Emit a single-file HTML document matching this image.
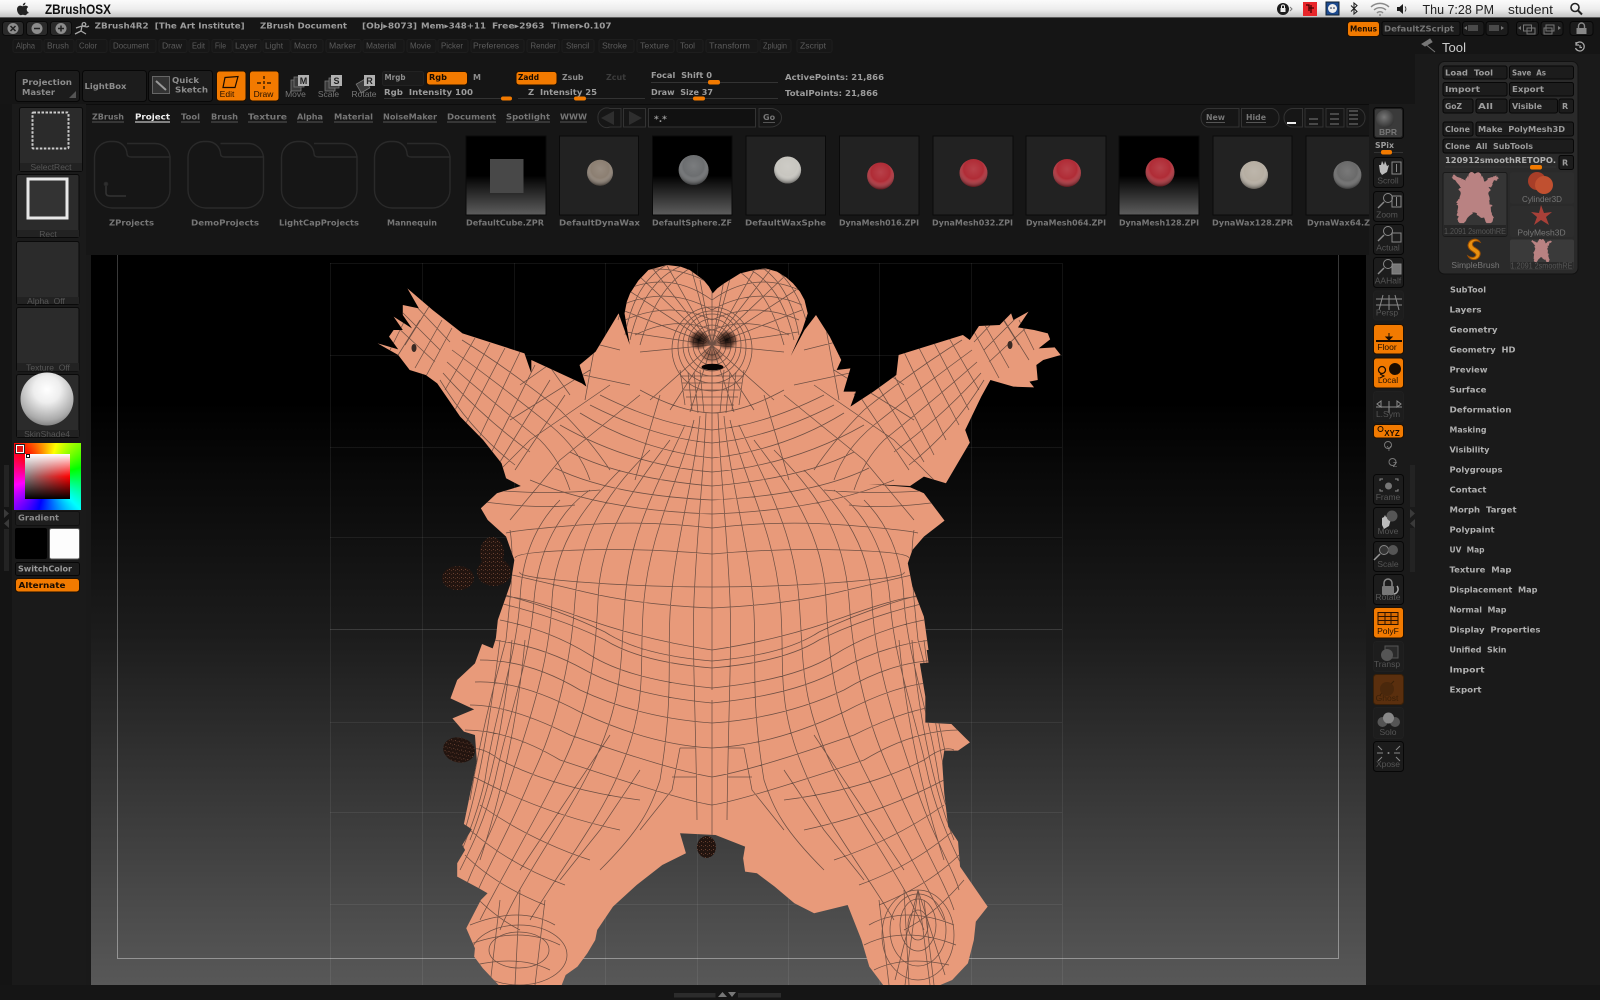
<!DOCTYPE html>
<html><head><meta charset="utf-8"><title>ZBrushOSX</title>
<style>
html,body{margin:0;padding:0;background:#191919;overflow:hidden}
#w{position:relative;width:1600px;height:1000px;overflow:hidden;filter:blur(.3px)}
svg{position:absolute;left:0;top:0}
text{white-space:pre}
.b{font:bold 8px "DejaVu Sans",sans-serif;fill:#9c9c9c}
.t{font:bold 8px "DejaVu Sans",sans-serif;fill:#b0b0b0}
.l{font:bold 8px "DejaVu Sans",sans-serif;fill:#767676}
.o{font:bold 8px "DejaVu Sans",sans-serif;fill:#1a0c00}
.m{font:8.5px "Liberation Sans",sans-serif;fill:#5c5c5c}
.s{font:8.5px "Liberation Sans",sans-serif;fill:#777;text-anchor:middle}
.d{font:8.5px "Liberation Sans",sans-serif;fill:#565656;text-anchor:middle}
.k{font:8.5px "Liberation Sans",sans-serif;fill:#241000;text-anchor:middle}
.btn{fill:#1c1c1c;stroke:#070707}
.org{fill:#f27a00;stroke:#201000}
.sh{fill:#2b2b2b;stroke:#0a0a0a}
.line{fill:none;stroke:#333;stroke-width:1}
</style></head>
<body><div id="w">
<svg width="1600" height="1000" viewBox="0 0 1600 1000" xmlns="http://www.w3.org/2000/svg">
<defs>
<linearGradient id="bar" x1="0" y1="0" x2="0" y2="1"><stop offset="0" stop-color="#fbfbfb"/><stop offset=".55" stop-color="#ececec"/><stop offset="1" stop-color="#c4c4c4"/></linearGradient>
<linearGradient id="cv" gradientUnits="userSpaceOnUse" x1="0" y1="255" x2="0" y2="985"><stop offset="0" stop-color="#000"/><stop offset=".2" stop-color="#000"/><stop offset=".52" stop-color="#1c1c1c"/><stop offset="1" stop-color="#585858"/></linearGradient>
<linearGradient id="fr" gradientUnits="userSpaceOnUse" x1="0" y1="255" x2="0" y2="960"><stop offset="0" stop-color="#fff" stop-opacity=".22"/><stop offset="1" stop-color="#fff" stop-opacity=".38"/></linearGradient>
<linearGradient id="th" x1="0" y1="0" x2="0" y2="1"><stop offset="0" stop-color="#000"/><stop offset=".5" stop-color="#000"/><stop offset="1" stop-color="#5e5e5e"/></linearGradient>
<radialGradient id="sp" cx=".5" cy=".36" r=".64"><stop offset="0" stop-color="#fff" stop-opacity=".1"/><stop offset=".55" stop-color="#fff" stop-opacity="0"/><stop offset="1" stop-color="#000" stop-opacity=".5"/></radialGradient>
<radialGradient id="ws" cx=".5" cy=".32" r=".72"><stop offset="0" stop-color="#fff"/><stop offset=".35" stop-color="#eee"/><stop offset=".8" stop-color="#aaa"/><stop offset="1" stop-color="#777"/></radialGradient>
<radialGradient id="bp" cx=".45" cy=".4" r=".6"><stop offset="0" stop-color="#777"/><stop offset="1" stop-color="#333"/></radialGradient>
<radialGradient id="dk" cx=".5" cy=".5" r=".5"><stop offset="0" stop-color="#000" stop-opacity=".95"/><stop offset=".6" stop-color="#1a0c08" stop-opacity=".65"/><stop offset="1" stop-color="#000" stop-opacity="0"/></radialGradient>
<pattern id="speck" width="4" height="4" patternUnits="userSpaceOnUse"><rect width="4" height="4" fill="#22140f"/><rect x="1" y="1" width="1" height="1" fill="#6a4232"/><rect x="3" y="2" width="1" height="1" fill="#4e3024"/></pattern>
<polygon id="p1" transform="translate(350,250) scale(.4591,.3333)" points="790,130 800,115 815,100 850,70 880,60 905,55 930,65 950,82 965,100 980,125 990,150 997,190 985,240 960,318 990,240 1015,195 1045,260 1070,330 1060,360 1090,355 1075,425 1102,425 1090,470 1140,425 1190,375 1195,315 1335,255 1350,270 1370,228 1415,225 1440,190 1445,210 1478,185 1455,232 1490,240 1520,250 1525,268 1500,295 1535,292 1548,315 1510,330 1495,345 1498,390 1480,395 1490,412 1445,410 1395,390 1375,440 1340,540 1350,578 1298,700 1250,680 1220,708 1130,702 1220,712 1250,730 1295,812 1250,860 1225,900 1215,940 1225,1010 1250,1100 1260,1200 315,1200 322,1110 350,1000 358,930 340,860 300,810 285,775 320,730 372,708 340,685 330,640 290,570 240,500 190,400 165,375 130,360 105,315 60,280 105,298 85,260 95,240 115,240 95,200 135,235 115,195 115,165 150,175 125,115 180,180 245,250 380,310 395,370 395,330 505,400 515,410 500,345 535,305 585,190 625,345 610,290 598,190 603,155 610,130 628,92 650,60 690,45 720,50 740,60 770,90 782,110"/>
<polygon id="p2" transform="translate(400,620) scale(.3944,.3333)" points="1325,0 1340,128 1318,130 1332,230 1332,308 1398,312 1445,367 1415,392 1380,392 1375,430 1380,520 1390,620 1415,665 1420,740 1490,860 1460,905 1455,960 1440,1030 1400,1080 1370,1095 1225,1095 1190,1040 1170,960 1135,855 1050,880 1000,850 950,800 905,760 875,755 870,715 875,680 800,645 710,640 725,700 665,735 600,795 540,860 500,930 495,960 475,1000 450,1040 420,1065 410,1095 250,1095 210,1045 188,1010 190,985 168,925 205,840 222,820 200,805 145,770 145,730 165,690 158,675 182,628 162,612 178,520 195,425 190,345 162,335 133,295 188,268 128,235 145,180 190,130 208,72 235,85 250,30 255,0"/>
<g id="sil"><use href="#p1"/><use href="#p2"/></g>
<clipPath id="silc"><use href="#p1"/><use href="#p2"/></clipPath>
<clipPath id="shelf"><rect x="86" y="130" width="1283" height="110"/></clipPath>
<path id="mesh" d="M706,413 C704,470 697,530 694,600 C692,650 696,720 697,820
M700,416 C694,480 676,540 671,600 C666,650 675,690 660,780 C650,810 640,830 600,870
M694,420 C680,480 650,530 644,600 C638,660 650,700 620,770 C600,820 560,870 530,920
M685,425 C660,480 630,530 625,600 C620,660 625,700 590,770 C560,830 520,880 500,930
M670,440 C640,480 600,530 598,600 C595,660 590,710 560,770 C530,830 500,880 480,920
M650,450 C610,490 580,530 575,600 C572,650 560,720 530,780 C510,830 480,880 470,910
M620,470 C590,500 555,540 552,600 C550,660 530,720 510,780 C495,830 470,870 465,890
M590,490 C560,510 538,550 534,600 C530,660 510,710 495,780 C485,820 470,850 460,870
M560,500 C540,520 522,550 520,600 C516,660 495,710 485,780 C478,810 470,830 462,850
M510,530 C515,560 510,600 506,640 C490,700 480,740 470,800
M500,640 C490,720 480,780 465,830 M512,640 C505,720 490,790 470,840 M525,640 C518,720 500,800 480,860
M640,770 L600,830 L560,880 M610,735 L560,810 L520,870 M680,748 L672,790 L640,830 M696,748 H680 M696,777 H672
M712,528 Q644,520 580,525 T506,533
M712,554 Q644,548 580,550 T515,558
M712,587 Q644,587 580,582 T520,572
M712,608 Q640,605 585,592 T512,575
M712,650 Q644,640 580,617 T502,597
M712,661 Q640,655 605,632 Q560,610 505,595
M712,668 Q640,662 605,640 Q560,618 503,604
M712,688 Q630,680 590,655 Q550,630 500,620
M712,703 Q630,695 585,670 Q540,645 492,640
M712,723 Q640,718 580,690 Q530,660 480,660
M712,748 Q650,745 580,712 Q520,680 475,682
M712,777 Q670,770 570,735 Q510,705 470,705
M712,805 Q680,800 560,760 Q510,730 465,730
M640,800 Q560,790 500,760 Q480,745 470,750
M620,830 Q550,815 490,785 L470,775
M590,860 Q530,840 480,805
M565,885 Q510,865 470,830
M545,905 Q495,885 465,855
M520,930 Q490,915 460,880
M470,925 Q520,905 555,925 M468,945 Q520,925 560,945 M475,965 Q520,955 550,970
M500,900 L490,985 M520,890 L515,985 M545,900 L535,985
M712,413 Q680,412 640,390
M712,430 Q660,425 600,395
M712,443 Q655,438 590,405
M712,458 Q640,450 580,413
M712,472 Q630,465 560,425
M712,486 Q620,478 570,452
M712,500 Q610,495 555,468
M712,514 Q600,510 530,480
M600,490 Q550,495 490,490 M575,505 Q540,510 470,500 M660,395 L635,480 M640,395 L560,460 L510,520 M610,385 L530,440 L490,480 M590,370 L510,420 M570,350 L520,385
M605,290 L585,400 M595,320 L545,360 L570,395 M580,340 L620,350 M560,370 L630,385
M462,340 Q510,370 560,410 Q590,440 610,470 M452,350 Q500,385 550,425 Q580,450 590,480 M447,362 Q490,400 540,440 Q560,460 570,490 M443,373 Q480,415 530,452 M440,380 Q470,430 515,465
M475,338 L445,390 M490,343 L455,410 M505,348 L465,425 M520,352 L478,440 M535,365 L490,455 M550,380 L500,462 M565,395 L515,470
M400,310 L440,350 M412,302 L450,342 M395,325 L435,362 M420,320 L395,360 M405,320 L390,350 M430,305 L405,345 M442,320 L415,368 M452,328 L425,378
M705,262 Q660,275 640,345 M690,263 Q645,275 630,340 M670,263 Q635,280 625,335 M650,268 Q628,285 618,320
M712,300 Q670,270 625,290 M712,310 Q668,285 622,305 M712,320 Q670,300 625,320 M712,330 Q675,315 635,335 M712,285 Q680,265 640,270 M712,275 Q690,262 660,262
M712,345 L665,262 M712,345 L650,265 M712,345 L638,275 M712,345 L628,290 M712,345 L622,310 M712,345 L626,332 M712,345 L640,352 M712,345 L690,264 M712,345 L700,280 M712,345 L650,400 M712,345 L670,410 M712,345 L690,412
M700,370 L704,413 M694,372 L698,413 M688,372 L692,410 M680,370 L685,405
M680,376 H712 M682,383 H712 M684,390 H712 M686,397 H712 M690,405 H712"/>
</defs>

<!-- base -->
<rect width="1600" height="1000" fill="#191919"/>
<rect x="0" y="18" width="1600" height="86" fill="#151515"/>
<rect x="0" y="104" width="12" height="896" fill="#141414"/>
<rect x="12" y="104" width="74" height="896" fill="#1a1a1a"/>
<rect x="1366" y="104" width="49" height="896" fill="#1a1a1a"/>
<rect x="1415" y="54" width="185" height="946" fill="#1a1a1a"/>
<rect x="0" y="985" width="1600" height="15" fill="#151515"/>

<!-- canvas -->
<rect x="91" y="255" width="1275" height="730" fill="url(#cv)"/>
<g fill="none" stroke="#fff" stroke-opacity=".07" stroke-width="1">
<path d="M330.5,263V985M422.5,263V985M514.5,263V985M605.5,263V985M697.5,263V985M788.5,263V985M879.5,263V985M971.5,263V985M1062.5,263V985"/>
<path d="M330,263.5H1062M330,355.5H1062M330,447.5H1062M330,537.5H1062M330,722.5H1062M330,812.5H1062M330,904.5H1062"/>
<path d="M330,629.5H1062" stroke-opacity=".14"/>
</g>
<path d="M117.5,255V958.5H1338.5V255" fill="none" stroke="url(#fr)"/>

<!-- model -->
<use href="#sil" fill="#e89a7a"/>
<g clip-path="url(#silc)" fill="none" stroke="#6f5044" stroke-width=".75">
<use href="#mesh"/>
<use href="#mesh" transform="translate(1424,0) scale(-1,1)"/>
<path d="M712,262V690M712,700V860"/>
<ellipse cx="712" cy="345" rx="9" ry="10"/><ellipse cx="712" cy="345" rx="14" ry="15"/><ellipse cx="712" cy="345" rx="19" ry="20"/><ellipse cx="712" cy="345" rx="24" ry="26"/><ellipse cx="712" cy="345" rx="29" ry="31"/><ellipse cx="712" cy="347" rx="34" ry="36"/><ellipse cx="712" cy="349" rx="40" ry="42"/>
<ellipse cx="918" cy="925" rx="10" ry="15"/><ellipse cx="918" cy="925" rx="18" ry="26"/><ellipse cx="918" cy="930" rx="28" ry="36"/><ellipse cx="918" cy="935" rx="36" ry="45"/>
<path d="M918,890 L905,985 M918,890 L930,985 M918,890 L895,980 M918,890 L945,975"/>
<ellipse cx="519" cy="950" rx="30" ry="18"/><ellipse cx="519" cy="955" rx="48" ry="30"/>
</g>
<ellipse cx="699" cy="340" rx="11" ry="10" fill="url(#dk)"/><ellipse cx="727" cy="340" rx="11" ry="10" fill="url(#dk)"/>
<ellipse cx="712" cy="355" rx="12" ry="8" fill="url(#dk)" opacity=".4"/>
<ellipse cx="712.5" cy="367" rx="11" ry="3.2" fill="#080404"/>
<ellipse cx="414" cy="348" rx="2.5" ry="4" fill="#3a2a24"/><ellipse cx="1010" cy="345" rx="2.5" ry="4" fill="#3a2a24"/>
<g fill="url(#speck)">
<ellipse cx="492" cy="553" rx="12" ry="16"/><ellipse cx="458" cy="578" rx="16" ry="12"/><ellipse cx="494" cy="572" rx="17" ry="14"/><ellipse cx="459" cy="750" rx="16" ry="12.5" transform="rotate(12 459 750)"/><ellipse cx="706.5" cy="847" rx="9.5" ry="11"/>
</g>

<!-- mac menu bar -->
<rect width="1600" height="17" fill="url(#bar)"/>
<rect y="17" width="1600" height="1" fill="#5a5a5a"/>
<path transform="translate(3,0)" d="M24.5 13.2c-.8 1.3-1.6 2-2.4 2-.8 0-1.2-.5-2.2-.5s-1.4.5-2.2.5c-1.5 0-3.7-3-3.7-5.8 0-2.4 1.6-3.8 3.1-3.8 1 0 1.8.6 2.7.6.9 0 1.6-.7 2.9-.6 1 .1 1.9.5 2.5 1.4-2.2 1.4-1.8 4.4.5 5.4-.2.5-.5.9-.7 1.3zM19.8 5.5c-.1-1.4 1.1-2.8 2.6-2.9.2 1.5-1.2 3-2.6 2.9z" fill="#222"/>
<text x="45" y="14" textLength="66" lengthAdjust="spacingAndGlyphs" style="font:bold 13.5px 'Liberation Sans',sans-serif;fill:#111">ZBrushOSX</text>
<circle cx="1283" cy="9" r="6" fill="#1c1c1c"/><rect x="1280.5" y="8" width="5" height="4" fill="#eee"/><path d="M1281.5,8V6.5a1.5,1.5 0 0 1 3,0V8" fill="none" stroke="#eee"/><path d="M1290,7l2,2-2,2" fill="none" stroke="#777"/>
<rect x="1303" y="2" width="14" height="14" fill="#e8262a"/><path d="M1306,5h3v6M1311,5v8M1309,8h5" stroke="#400" fill="none" stroke-width="1.3"/>
<rect x="1326" y="2" width="13" height="13" fill="#1c4a90" stroke="#123"/><circle cx="1332.5" cy="8.5" r="4.5" fill="#eee"/><circle cx="1331" cy="8" r=".8" fill="#124"/><circle cx="1334" cy="8" r=".8" fill="#124"/>
<path d="M1351,5.5l6,6-3,2.5v-11l3,2.5-6,6" fill="none" stroke="#222" stroke-width="1.1"/>
<path d="M1371,7a13,13 0 0 1 18,0M1374,10a9,9 0 0 1 12,0M1377,13a4,4 0 0 1 6,0" fill="none" stroke="#8a8a8a" stroke-width="1.4"/><circle cx="1380" cy="15" r="1" fill="#888"/>
<path d="M1397,7h2.5l3.5-3v10l-3.5-3h-2.5z" fill="#1c1c1c"/><path d="M1405,6.5a4,4 0 0 1 0,5" fill="none" stroke="#333"/>
<text x="1422.5" y="14" textLength="71.5" lengthAdjust="spacingAndGlyphs" style="font:13px 'Liberation Sans',sans-serif;fill:#222">Thu 7:28 PM</text>
<text x="1508" y="14" textLength="45" lengthAdjust="spacingAndGlyphs" style="font:13px 'Liberation Sans',sans-serif;fill:#222">student</text>
<circle cx="1575" cy="7.5" r="4" fill="none" stroke="#222" stroke-width="1.6"/><path d="M1578,10.5l4,4" stroke="#222" stroke-width="2"/>

<!-- title row -->
<g>
<rect x="2.5" y="21.5" width="21" height="14" rx="3" fill="#2a2a2a" stroke="#0a0a0a"/><rect x="26.5" y="21.5" width="21" height="14" rx="3" fill="#2a2a2a" stroke="#0a0a0a"/><rect x="50.5" y="21.5" width="21" height="14" rx="3" fill="#2a2a2a" stroke="#0a0a0a"/>
<circle cx="13" cy="28.5" r="5.5" fill="#8c8c8c"/><circle cx="37" cy="28.5" r="5.5" fill="#8c8c8c"/><circle cx="61" cy="28.5" r="5.5" fill="#8c8c8c"/>
<path d="M10.5,26l5,5m0-5l-5,5M34,28.5h6M58,28.5h6M61,25.5v6" stroke="#222" stroke-width="1.5"/>
<path d="M84,22.5a1.8,1.8 0 1 1-.1,0M82,26l-6,2M82,26l5,1 2,-1M82,26l-1,5-6,3M81,31l5,3" fill="none" stroke="#a8a8a8" stroke-width="1.3"/>
</g>
<g class="tt">
<text class="b" x="94.7" y="28.5" textLength="150" lengthAdjust="spacingAndGlyphs">ZBrush4R2  [The Art Institute]</text>
<text class="b" x="260" y="28.5" textLength="87" lengthAdjust="spacingAndGlyphs">ZBrush Document</text>
<text class="b" x="362" y="28.5" textLength="55" lengthAdjust="spacingAndGlyphs">[Obj▸8073]</text>
<text class="b" x="421" y="28.5" textLength="65" lengthAdjust="spacingAndGlyphs">Mem▸348+11</text>
<text class="b" x="492" y="28.5" textLength="52.5" lengthAdjust="spacingAndGlyphs">Free▸2963</text>
<text class="b" x="551" y="28.5" textLength="60.5" lengthAdjust="spacingAndGlyphs">Timer▸0.107</text>
</g>

<!-- menu row -->
<g fill="#171717" stroke="#1e1e1e">
<rect x="13" y="39.5" width="29" height="13" rx="2"/><rect x="44" y="39.5" width="30" height="13" rx="2"/><rect x="76" y="39.5" width="31" height="13" rx="2"/><rect x="110" y="39.5" width="46" height="13" rx="2"/><rect x="159" y="39.5" width="28" height="13" rx="2"/><rect x="189" y="39.5" width="20" height="13" rx="2"/><rect x="212" y="39.5" width="20" height="13" rx="2"/><rect x="233" y="39.5" width="28" height="13" rx="2"/><rect x="263" y="39.5" width="27" height="13" rx="2"/><rect x="291" y="39.5" width="32" height="13" rx="2"/><rect x="326" y="39.5" width="35" height="13" rx="2"/><rect x="363" y="39.5" width="41" height="13" rx="2"/><rect x="407" y="39.5" width="29" height="13" rx="2"/><rect x="438" y="39.5" width="30" height="13" rx="2"/><rect x="471" y="39.5" width="53" height="13" rx="2"/><rect x="527" y="39.5" width="32" height="13" rx="2"/><rect x="562" y="39.5" width="32" height="13" rx="2"/><rect x="599" y="39.5" width="35" height="13" rx="2"/><rect x="637" y="39.5" width="37" height="13" rx="2"/><rect x="677" y="39.5" width="26" height="13" rx="2"/><rect x="706" y="39.5" width="52" height="13" rx="2"/><rect x="760" y="39.5" width="31" height="13" rx="2"/><rect x="797" y="39.5" width="35" height="13" rx="2"/>
</g>
<g>
<text class="m" x="16" y="48.5" textLength="19" lengthAdjust="spacingAndGlyphs">Alpha</text>
<text class="m" x="47" y="48.5" textLength="22" lengthAdjust="spacingAndGlyphs">Brush</text>
<text class="m" x="79" y="48.5" textLength="18" lengthAdjust="spacingAndGlyphs">Color</text>
<text class="m" x="113" y="48.5" textLength="36" lengthAdjust="spacingAndGlyphs">Document</text>
<text class="m" x="162" y="48.5" textLength="20" lengthAdjust="spacingAndGlyphs">Draw</text>
<text class="m" x="192" y="48.5" textLength="13" lengthAdjust="spacingAndGlyphs">Edit</text>
<text class="m" x="215" y="48.5" textLength="11" lengthAdjust="spacingAndGlyphs">File</text>
<text class="m" x="235" y="48.5" textLength="22" lengthAdjust="spacingAndGlyphs">Layer</text>
<text class="m" x="265" y="48.5" textLength="18" lengthAdjust="spacingAndGlyphs">Light</text>
<text class="m" x="294" y="48.5" textLength="23" lengthAdjust="spacingAndGlyphs">Macro</text>
<text class="m" x="329" y="48.5" textLength="27" lengthAdjust="spacingAndGlyphs">Marker</text>
<text class="m" x="366" y="48.5" textLength="30" lengthAdjust="spacingAndGlyphs">Material</text>
<text class="m" x="410" y="48.5" textLength="21" lengthAdjust="spacingAndGlyphs">Movie</text>
<text class="m" x="441" y="48.5" textLength="22" lengthAdjust="spacingAndGlyphs">Picker</text>
<text class="m" x="473" y="48.5" textLength="46" lengthAdjust="spacingAndGlyphs">Preferences</text>
<text class="m" x="530.5" y="48.5" textLength="25.5" lengthAdjust="spacingAndGlyphs">Render</text>
<text class="m" x="566" y="48.5" textLength="23.5" lengthAdjust="spacingAndGlyphs">Stencil</text>
<text class="m" x="602" y="48.5" textLength="25" lengthAdjust="spacingAndGlyphs">Stroke</text>
<text class="m" x="640" y="48.5" textLength="29" lengthAdjust="spacingAndGlyphs">Texture</text>
<text class="m" x="680" y="48.5" textLength="15" lengthAdjust="spacingAndGlyphs">Tool</text>
<text class="m" x="709" y="48.5" textLength="41" lengthAdjust="spacingAndGlyphs">Transform</text>
<text class="m" x="763" y="48.5" textLength="24" lengthAdjust="spacingAndGlyphs">Zplugin</text>
<text class="m" x="800" y="48.5" textLength="26" lengthAdjust="spacingAndGlyphs">Zscript</text>
</g>

<!-- top right row -->
<rect x="1347.5" y="21.5" width="32" height="15" rx="3" class="org"/>
<text class="o" x="1350" y="31.5" textLength="27" lengthAdjust="spacingAndGlyphs">Menus</text>
<rect x="1382" y="21.5" width="78" height="14" rx="2" class="btn"/>
<text class="l" x="1384" y="31.5" textLength="70" lengthAdjust="spacingAndGlyphs">DefaultZScript</text>
<g fill="#1c1c1c" stroke="#070707"><rect x="1462.5" y="21.5" width="21.5" height="14" rx="3"/><rect x="1486" y="21.5" width="22" height="14" rx="3"/><rect x="1516.5" y="21.5" width="22" height="14" rx="3"/><rect x="1541" y="21.5" width="22" height="14" rx="3"/><rect x="1570" y="21.5" width="23" height="14" rx="3"/></g>
<path d="M1469,25v6M1471,25v6M1473,25v6M1475,25v6M1477,25v6M1490,25v6M1492,25v6M1494,25v6M1496,25v6M1498,25v6" stroke="#777"/>
<path d="M1467,26l-3,2 3,2zM1501,26l3,2-3,2zM1521,26l-3,2 3,2zM1558,26l3,2-3,2z" fill="#777"/>
<path d="M1523.5,25h8v6h-8zM1527,28h8v6h-8zM1546,25h8v6h-8zM1544,28h8v6h-8z" fill="none" stroke="#777"/>
<rect x="1576.5" y="28" width="10" height="6" fill="#888"/><path d="M1578.5,28v-2a3,3 0 0 1 6,0v2" fill="none" stroke="#888" stroke-width="1.4"/>

<!-- main buttons -->
<rect x="15.5" y="70.5" width="64" height="31" rx="3" class="btn"/>
<text class="l" x="22" y="85" textLength="50" lengthAdjust="spacingAndGlyphs" style="fill:#8c8c8c">Projection</text>
<text class="l" x="22" y="95" textLength="33" lengthAdjust="spacingAndGlyphs" style="fill:#8c8c8c">Master</text>
<path d="M69,98l7-7v7z" fill="#555"/>
<rect x="82.5" y="70.5" width="64" height="31" rx="3" class="btn"/>
<text class="l" x="84.5" y="89" textLength="42" lengthAdjust="spacingAndGlyphs" style="fill:#8c8c8c">LightBox</text>
<rect x="148.5" y="70.5" width="64" height="31" rx="3" class="btn"/>
<rect x="152.5" y="76.5" width="17" height="17" fill="#333" stroke="#666"/><path d="M156,81l10,9" stroke="#999" stroke-width="2"/>
<text class="l" x="172" y="83" textLength="27" lengthAdjust="spacingAndGlyphs" style="fill:#8c8c8c">Quick</text>
<text class="l" x="175" y="92.5" textLength="33" lengthAdjust="spacingAndGlyphs" style="fill:#8c8c8c">Sketch</text>
<rect x="216.5" y="71" width="29.5" height="30" rx="3" class="org"/>
<rect x="249.5" y="71" width="29.5" height="30" rx="3" class="org"/>
<path d="M225,77.5l13,-1-3,11-12,0z" fill="none" stroke="#1a0c00" stroke-width="1.2"/>
<path d="M264,76v3M264,81v3M264,86v3M257,83h4M267,83h4" stroke="#1a0c00" stroke-width="1.2"/>
<text class="k" x="227" y="97">Edit</text><text class="k" x="263.5" y="97">Draw</text>
<!-- move scale rotate -->
<g fill="#3a3a3a" stroke="#777" stroke-width=".8"><rect x="291" y="80" width="10" height="11"/><rect x="294" y="77" width="10" height="10"/><rect x="325" y="81" width="10" height="10"/><rect x="329" y="78" width="10" height="10"/><rect x="358" y="81" width="10" height="10" transform="rotate(-30 363 86)"/></g>
<rect x="298" y="75" width="11" height="11" fill="#b0b0b0"/><rect x="331" y="75" width="11" height="11" fill="#b0b0b0"/><rect x="364" y="75" width="11" height="11" fill="#b0b0b0"/>
<text x="303.5" y="84" style="font:bold 9px 'Liberation Sans',sans-serif;fill:#222;text-anchor:middle">M</text><text x="336.5" y="84" style="font:bold 9px 'Liberation Sans',sans-serif;fill:#222;text-anchor:middle">S</text><text x="369.5" y="84" style="font:bold 9px 'Liberation Sans',sans-serif;fill:#222;text-anchor:middle">R</text>
<text class="d" x="295.5" y="97" style="fill:#777">Move</text><text class="d" x="328.5" y="97" style="fill:#777">Scale</text><text class="d" x="364" y="97" style="fill:#777">Rotate</text>
<!-- rgb -->
<rect x="382.5" y="71.5" width="41" height="14" rx="2" fill="#1a1a1a" stroke="#222"/>
<text class="l" x="384.5" y="80" textLength="21" lengthAdjust="spacingAndGlyphs" style="fill:#8c8c8c">Mrgb</text>
<rect x="426.5" y="71.5" width="41" height="13.5" rx="3" class="org"/>
<text class="o" x="429" y="80" textLength="18" lengthAdjust="spacingAndGlyphs">Rgb</text>
<text class="l" x="473" y="80" style="fill:#8c8c8c">M</text>
<text class="b" x="384" y="95" textLength="89" lengthAdjust="spacingAndGlyphs">Rgb  Intensity 100</text>
<path class="line" d="M384,98.5H512M518,98.5H645M651,82.5H778M651,98.5H778"/>
<g fill="#f27a00"><rect x="501" y="96.5" width="11" height="4" rx="2"/><rect x="574" y="96.5" width="12" height="4" rx="2"/><rect x="708" y="80" width="12" height="4.5" rx="2"/><rect x="693" y="96.5" width="12" height="4" rx="2"/></g>
<rect x="516" y="71.5" width="41" height="13.5" rx="3" class="org"/>
<text class="o" x="518" y="80" textLength="21" lengthAdjust="spacingAndGlyphs">Zadd</text>
<text class="l" x="562" y="80" textLength="21.5" lengthAdjust="spacingAndGlyphs" style="fill:#8c8c8c">Zsub</text>
<text class="l" x="606" y="80" textLength="20" lengthAdjust="spacingAndGlyphs" style="fill:#3c3c3c">Zcut</text>
<text class="b" x="528" y="95" textLength="69" lengthAdjust="spacingAndGlyphs">Z  Intensity 25</text>
<text class="b" x="651" y="78" textLength="61" lengthAdjust="spacingAndGlyphs">Focal  Shift 0</text>
<text class="b" x="651" y="95" textLength="62" lengthAdjust="spacingAndGlyphs">Draw  Size 37</text>
<text class="b" x="785" y="80" textLength="99" lengthAdjust="spacingAndGlyphs">ActivePoints: 21,866</text>
<text class="b" x="785" y="96" textLength="93" lengthAdjust="spacingAndGlyphs">TotalPoints: 21,866</text>

<!-- shelf panel -->
<rect x="86" y="104" width="1283" height="151" fill="#161616"/>
<rect x="86" y="104" width="1283" height="1" fill="#0c0c0c"/>
<g class="tabs">
<text class="l" x="92" y="119.5" textLength="32" lengthAdjust="spacingAndGlyphs">ZBrush</text>
<text x="135" y="119.5" textLength="35" lengthAdjust="spacingAndGlyphs" style="font:bold 8px 'DejaVu Sans',sans-serif;fill:#f0f0f0">Project</text>
<text class="l" x="181" y="119.5" textLength="19" lengthAdjust="spacingAndGlyphs">Tool</text>
<text class="l" x="211" y="119.5" textLength="27" lengthAdjust="spacingAndGlyphs">Brush</text>
<text class="l" x="248" y="119.5" textLength="39" lengthAdjust="spacingAndGlyphs">Texture</text>
<text class="l" x="297" y="119.5" textLength="26" lengthAdjust="spacingAndGlyphs">Alpha</text>
<text class="l" x="334" y="119.5" textLength="39" lengthAdjust="spacingAndGlyphs">Material</text>
<text class="l" x="383" y="119.5" textLength="54" lengthAdjust="spacingAndGlyphs">NoiseMaker</text>
<text class="l" x="447" y="119.5" textLength="49" lengthAdjust="spacingAndGlyphs">Document</text>
<text class="l" x="506" y="119.5" textLength="44" lengthAdjust="spacingAndGlyphs">Spotlight</text>
<text class="l" x="560" y="119.5" textLength="27" lengthAdjust="spacingAndGlyphs">WWW</text>
</g>
<path d="M92,122H124M181,122H200M211,122H238M248,122H287M297,122H323M334,122H373M383,122H437M447,122H496M506,122H550M560,122H587" stroke="#555" fill="none"/>
<path d="M135,122H170" stroke="#eee"/>
<!-- nav -->
<g fill="#161616" stroke="#333">
<path d="M610,108.5H621V127H610A9,9 0 0 1 598,118 A9,9 0 0 1 610,108.5Z"/><rect x="623.5" y="108.5" width="22" height="18.5"/><rect x="648.5" y="108.5" width="107" height="18.5" fill="#111"/><path d="M759,108.5H770A11,9 0 0 1 781.5,118 A11,9 0 0 1 770,127H759Z"/>
<path d="M1208,108.5H1239V127H1208A8,9 0 0 1 1201,118 A8,9 0 0 1 1208,108.5Z"/><path d="M1241.5,108.5H1272A8,9 0 0 1 1279,118 A8,9 0 0 1 1272,127H1241.5Z"/>
<path d="M1293,108.5H1302.5V127H1293A9,9 0 0 1 1284,118 A9,9 0 0 1 1293,108.5Z"/><rect x="1305" y="108.5" width="18" height="18.5"/><rect x="1326" y="108.5" width="18" height="18.5"/><path d="M1347,108.5H1357A8,9 0 0 1 1365,118 A8,9 0 0 1 1357,127H1347Z"/>
</g>
<path d="M601,118l13-7v14zM642,118l-13-7v14z" fill="#2e2e2e"/>
<text x="654" y="122" style="font:bold 9px 'DejaVu Sans',sans-serif;fill:#999">*.*</text>
<text class="l" x="763" y="120">Go</text><path d="M763,122.5H775" stroke="#555"/>
<text class="l" x="1206" y="120" textLength="19" lengthAdjust="spacingAndGlyphs">New</text><text class="l" x="1246" y="120" textLength="20" lengthAdjust="spacingAndGlyphs">Hide</text>
<path d="M1206,122.5H1225M1246,122.5H1266" stroke="#555"/>
<path d="M1287,123h9" stroke="#eee" stroke-width="2"/>
<path d="M1309,119h9M1309,124h9M1330,114h9M1330,119h9M1330,124h9M1349,111h9M1349,115h9M1349,119h9M1349,124h9" stroke="#666" stroke-width="1.2"/>

<!-- folders -->
<g fill="none" stroke="#2a2a2a" stroke-width="1.4">
<g id="fld"><path d="M110,141.5H114A13,13 0 0 1 127,153.5Q127,157 131,157H170V190A18,18 0 0 1 152,208H112A18,18 0 0 1 94.5,190V157A16,16 0 0 1 110,141.5Z M127,143.5H155A15,15 0 0 1 170,157"/></g>
<use href="#fld" x="93.5"/><use href="#fld" x="187"/><use href="#fld" x="280"/>
<path d="M106,184V193Q106,196 110,196H126" stroke="#333" stroke-width="1.6"/><circle cx="106" cy="184" r="1.6" fill="#333"/>
</g>
<g class="lab">
<text class="l" x="109" y="225.5" textLength="45" lengthAdjust="spacingAndGlyphs">ZProjects</text>
<text class="l" x="191" y="225.5" textLength="68" lengthAdjust="spacingAndGlyphs">DemoProjects</text>
<text class="l" x="279" y="225.5" textLength="80" lengthAdjust="spacingAndGlyphs">LightCapProjects</text>
<text class="l" x="387" y="225.5" textLength="50" lengthAdjust="spacingAndGlyphs">Mannequin</text>
<text class="l" x="466" y="225.5" textLength="78" lengthAdjust="spacingAndGlyphs">DefaultCube.ZPR</text>
<text class="l" x="559" y="225.5" textLength="81" lengthAdjust="spacingAndGlyphs">DefaultDynaWax</text>
<text class="l" x="652" y="225.5" textLength="80" lengthAdjust="spacingAndGlyphs">DefaultSphere.ZF</text>
<text class="l" x="745" y="225.5" textLength="81" lengthAdjust="spacingAndGlyphs">DefaultWaxSphe</text>
<text class="l" x="839" y="225.5" textLength="80" lengthAdjust="spacingAndGlyphs">DynaMesh016.ZPI</text>
<text class="l" x="932" y="225.5" textLength="81" lengthAdjust="spacingAndGlyphs">DynaMesh032.ZPI</text>
<text class="l" x="1026" y="225.5" textLength="80" lengthAdjust="spacingAndGlyphs">DynaMesh064.ZPI</text>
<text class="l" x="1119" y="225.5" textLength="80" lengthAdjust="spacingAndGlyphs">DynaMesh128.ZPI</text>
<text class="l" x="1212" y="225.5" textLength="81" lengthAdjust="spacingAndGlyphs">DynaWax128.ZPR</text>
<text class="l" x="1307" y="225.5" textLength="63" lengthAdjust="spacingAndGlyphs">DynaWax64.Z</text>
</g>
<!-- thumbs -->
<g stroke="#0a0a0a" clip-path="url(#shelf)">
<rect x="466" y="136" width="80" height="79" fill="url(#th)"/>
<rect x="559.5" y="136" width="79" height="79" fill="#222"/>
<rect x="652.5" y="136" width="79.5" height="79" fill="url(#th)"/>
<rect x="746" y="136" width="79.5" height="79" fill="#222"/>
<rect x="839.5" y="136" width="79.5" height="79" fill="#222"/>
<rect x="933" y="136" width="80" height="79" fill="#222"/>
<rect x="1026" y="136" width="80" height="79" fill="#222"/>
<rect x="1119" y="136" width="80" height="79" fill="url(#th)"/>
<rect x="1213" y="136" width="79" height="79" fill="#222"/>
<rect x="1306" y="136" width="79" height="79" fill="#222"/>
</g>
<rect x="490" y="159" width="33.5" height="34" fill="#484848"/>
<g stroke="none">
<circle cx="600" cy="172.7" r="13" fill="#8c7f72"/><circle cx="600" cy="172.7" r="13" fill="url(#sp)"/>
<circle cx="693.6" cy="170" r="15" fill="#6c6e70"/><circle cx="693.6" cy="170" r="15" fill="url(#sp)"/>
<circle cx="787.6" cy="170" r="13.5" fill="#c8c6c0"/><circle cx="787.6" cy="170" r="13.5" fill="url(#sp)"/>
<circle cx="880.6" cy="176" r="13.5" fill="#b02c36"/><circle cx="880.6" cy="176" r="13.5" fill="url(#sp)"/>
<circle cx="973.5" cy="173" r="14" fill="#b02c36"/><circle cx="973.5" cy="173" r="14" fill="url(#sp)"/>
<circle cx="1067" cy="173" r="14" fill="#b02c36"/><circle cx="1067" cy="173" r="14" fill="url(#sp)"/>
<circle cx="1160" cy="172" r="14.5" fill="#b02c36"/><circle cx="1160" cy="172" r="14.5" fill="url(#sp)"/>
<circle cx="1254" cy="175" r="14" fill="#b6aea2"/><circle cx="1254" cy="175" r="14" fill="url(#sp)"/>
<circle cx="1347.4" cy="175" r="14" fill="#6a6a6a"/><circle cx="1347.4" cy="175" r="14" fill="url(#sp)"/>
</g>

<!-- left panel -->
<g class="sh">
<rect x="19.5" y="107.5" width="63" height="64" rx="2"/><rect x="16.5" y="174.5" width="62.5" height="63" rx="2"/><rect x="16.5" y="241.5" width="62.5" height="63" rx="2"/><rect x="16.5" y="307.5" width="62.5" height="63.5" rx="2"/><rect x="16.5" y="374.5" width="62.5" height="63" rx="2"/>
</g>
<g fill="#222"><rect x="20" y="163" width="62" height="8"/><rect x="17" y="230" width="62" height="7"/><rect x="17" y="297" width="62" height="7"/><rect x="17" y="363" width="62" height="8"/><rect x="17" y="430" width="62" height="7"/></g>
<rect x="32.5" y="112.5" width="36" height="36" rx="1" fill="none" stroke="#ccc" stroke-width="2" stroke-dasharray="2.5 1.5"/>
<rect x="28" y="179" width="39" height="39" fill="#333" stroke="#e8e8e8" stroke-width="3"/>
<text class="d" x="51" y="170">SelectRect</text><text class="d" x="48" y="237">Rect</text><text class="d" x="46" y="304">Alpha  Off</text><text class="d" x="48" y="370.5">Texture  Off</text><text class="d" x="47" y="437">SkinShade4</text>
<circle cx="47" cy="399" r="26.5" fill="url(#ws)"/>
<rect x="15.5" y="511.5" width="64" height="14" rx="2" fill="#1e1e1e" stroke="#111"/>
<text class="l" x="18" y="520.5" textLength="41" lengthAdjust="spacingAndGlyphs" style="fill:#8c8c8c">Gradient</text>
<rect x="15" y="528" width="32" height="31" rx="2" fill="#000"/>
<rect x="49.5" y="528.5" width="30" height="30.5" rx="2" fill="#fdfdfd" stroke="#555"/>
<rect x="15.5" y="562.5" width="64" height="13" rx="2" class="btn"/>
<text class="b" x="18" y="571.5" textLength="54" lengthAdjust="spacingAndGlyphs">SwitchColor</text>
<rect x="15.5" y="578.5" width="64" height="13.5" rx="3" class="org"/>
<text class="o" x="18.5" y="588" textLength="47" lengthAdjust="spacingAndGlyphs">Alternate</text>
<g fill="#232323"><rect x="4" y="465" width="5" height="42"/><rect x="4" y="529" width="5" height="42"/><rect x="1410" y="465" width="5" height="42"/><rect x="1410" y="528" width="5" height="44"/></g>
<path d="M4,509l5,4.5-5,4.5zM9,519l-5,4.5 5,4.5zM1410,509l5,4.5-5,4.5zM1415,519l-5,4.5 5,4.5z" fill="#3a3a3a"/>
<!-- bottom handle -->
<rect x="674" y="993" width="41.5" height="4.5" fill="#2c2c2c"/><rect x="738" y="993" width="43" height="4.5" fill="#2c2c2c"/>
<path d="M718,997l4.5,-5 4.5,5zM728,992h8l-4,5z" fill="#777"/>

<!-- right shelf -->
<g class="btn">
<rect x="1373.5" y="107.5" width="30" height="31" rx="3"/><rect x="1373.5" y="157.5" width="30" height="30" rx="3"/><rect x="1373.5" y="191.5" width="30" height="30" rx="3"/><rect x="1373.5" y="224.5" width="30" height="30" rx="3"/><rect x="1373.5" y="257.5" width="30" height="30" rx="3"/>
<rect x="1373.5" y="474.5" width="30" height="30" rx="3"/><rect x="1373.5" y="507.5" width="30" height="31" rx="3"/><rect x="1373.5" y="541.5" width="30" height="30" rx="3"/><rect x="1373.5" y="574.5" width="30" height="30" rx="3"/><rect x="1373.5" y="741.5" width="30" height="30" rx="3"/>
</g>
<g fill="#1d1d1d" stroke="#202020"><rect x="1373.5" y="291" width="30" height="29" rx="3"/><rect x="1373.5" y="391.5" width="30" height="30" rx="3"/><rect x="1373.5" y="641.5" width="30" height="30" rx="3"/><rect x="1373.5" y="707.5" width="30" height="31" rx="3"/></g>
<rect x="1375" y="109" width="27" height="28" rx="2" fill="#3a3a3a"/><circle cx="1385" cy="119" r="9" fill="url(#bp)"/>
<text class="d" x="1388" y="135" style="font-weight:bold;fill:#777">BPR</text>
<text class="b" x="1375" y="148" textLength="19" lengthAdjust="spacingAndGlyphs">SPix</text>
<path class="line" d="M1374,152.5H1403"/><rect x="1381" y="150" width="11" height="4.5" rx="2" fill="#f27a00"/>
<g class="org"><rect x="1373.5" y="324.5" width="30" height="29.5" rx="3"/><rect x="1373.5" y="358" width="30" height="30" rx="3"/><rect x="1373.5" y="424.5" width="30" height="13.5" rx="3"/><rect x="1373.5" y="607.5" width="30" height="30.5" rx="3"/></g>
<rect x="1373.5" y="674.5" width="30" height="30" rx="3" fill="#5a2f0e" stroke="#3a2008"/>
<!-- shelf icons -->
<g fill="none" stroke="#8a8a8a" stroke-width="1">
<rect x="1392" y="162" width="9" height="12"/><path d="M1396.5,164v8"/>
<rect x="1392" y="196" width="9" height="11"/><path d="M1396.5,197v9"/>
<rect x="1392" y="233" width="9" height="9"/>
<rect x="1392" y="264" width="9" height="10" fill="#777"/>
<circle cx="1388" cy="198" r="4.5"/><path d="M1384,202l-6,6" stroke-width="1.5"/>
<circle cx="1388" cy="231" r="4.5"/><path d="M1384,235l-6,6" stroke-width="1.5"/>
<circle cx="1388" cy="264" r="4.5"/><path d="M1384,268l-6,6" stroke-width="1.5"/>
<path d="M1376,299h26M1376,305h26M1383,295l-4,15M1395,295l4,15M1389,295v15"/>
<path d="M1376,407h26M1389,401v12M1377,404l4,-3v6zM1401,404l-4,-3v6z"/>
<path d="M1380,481v-2h3M1398,481v-2h-3M1380,489v2h3M1398,489v2h-3"/>
</g>
<path d="M1380,172l-1,-7 2,0 1,-4 2,4 1,-4 2,5 2,-1-2,7-5,3z" fill="#bbb"/>
<path d="M1382,525v-7l2,-1 1,-2 1,2 2,-1 1,3 2,0-2,7-5,3z" fill="#bbb"/><circle cx="1392" cy="516" r="5.5" fill="#555"/>
<circle cx="1388.5" cy="486" r="3.5" fill="#777"/>
<circle cx="1384" cy="550" r="4.5" fill="#333" stroke="#888"/><circle cx="1393" cy="550" r="5" fill="#555"/><path d="M1380,554l-6,6" stroke="#999" stroke-width="1.5"/>
<rect x="1382" y="586" width="12" height="9" rx="1" fill="#777"/><path d="M1384,586v-3a4,4 0 0 1 8,0v3" fill="none" stroke="#888" stroke-width="1.5"/><path d="M1397,586a5,5 0 0 1 -3,8" fill="none" stroke="#aaa" stroke-width="1.5"/>
<path d="M1376,341h26" stroke="#1a0c00" stroke-width="2"/><path d="M1389,333v6M1386,337h6l-3,3z" stroke="#1a0c00" fill="#1a0c00"/>
<circle cx="1395" cy="369" r="6" fill="#1a0c00"/><circle cx="1382" cy="370" r="3.5" fill="none" stroke="#1a0c00" stroke-width="1.3"/><path d="M1380,374l4,2-4,2" fill="none" stroke="#1a0c00"/>
<circle cx="1380.5" cy="429" r="2.5" fill="none" stroke="#1a0c00"/>
<text x="1392" y="436" style="font:bold 8px 'Liberation Sans',sans-serif;fill:#1a0c00;text-anchor:middle">XYZ</text>
<g fill="none" stroke="#777"><circle cx="1388" cy="445" r="3.5"/><circle cx="1392.5" cy="462" r="3.5"/></g>
<text x="1389" y="451" style="font:7px 'Liberation Sans',sans-serif;fill:#888;text-anchor:middle">Y</text><text x="1395" y="467" style="font:7px 'Liberation Sans',sans-serif;fill:#888;text-anchor:middle">Z</text>
<path d="M1378,612.5h20v12h-20zM1378,616.5h20M1378,620.5h20M1385,612.5v12M1391,612.5v12" fill="#d86a00" stroke="#2a1200" stroke-width="1"/>
<rect x="1385" y="646" width="13" height="12" fill="#2a2a2a" stroke="#555"/><circle cx="1387" cy="655" r="6" fill="#555"/>
<path d="M1380,695l14,-14" stroke="#3a2008"/><circle cx="1387" cy="689" r="7" fill="#4a280c"/>
<circle cx="1382.5" cy="722" r="5" fill="#555"/><circle cx="1395" cy="722" r="5" fill="#555"/><circle cx="1388.5" cy="718" r="5.5" fill="#888"/>
<path d="M1378,746l4,4M1400,746l-4,4M1378,761l4,-4M1400,761l-4,-4M1377,753h6M1394,753h6" stroke="#888" fill="none"/><circle cx="1388.5" cy="753" r="1" fill="#888"/>
<g>
<text class="d" x="1388" y="183.5">Scroll</text><text class="d" x="1387" y="217.5">Zoom</text><text class="d" x="1388" y="250.5">Actual</text><text class="d" x="1388" y="283.5">AAHalf</text><text class="d" x="1387" y="315.5">Persp</text>
<text class="k" x="1387" y="350">Floor</text><text class="k" x="1388" y="383">Local</text><text class="d" x="1388" y="417">L.Sym</text>
<text class="d" x="1388" y="500">Frame</text><text class="d" x="1388" y="534">Move</text><text class="d" x="1388" y="567">Scale</text><text class="d" x="1388" y="600">Rotate</text><text class="k" x="1388" y="634">PolyF</text><text class="d" x="1387" y="667">Transp</text><text class="d" x="1387" y="701" style="fill:#3a2008">Ghost</text><text class="d" x="1388" y="735">Solo</text><text class="d" x="1388" y="767">Xpose</text>
</g>

<!-- tool panel -->
<path d="M1424,43l11,9M1430,39l-8,5 3,2 7,-4z" fill="#777" stroke="#777"/>
<text x="1442" y="52" textLength="24" lengthAdjust="spacingAndGlyphs" style="font:13px 'Liberation Sans',sans-serif;fill:#ccc">Tool</text>
<path d="M1576,44a4.5,4.5 0 1 1 -.5,4M1576,42v3h3M1580,45v2.5h2" fill="none" stroke="#aaa" stroke-width="1.2"/>
<rect x="1438.5" y="61.5" width="139.5" height="212.5" rx="6" fill="#2a2a2a" stroke="#111"/>
<g class="btn">
<rect x="1443" y="66" width="64" height="13" rx="2"/><rect x="1509.5" y="66" width="64" height="13" rx="2"/>
<rect x="1443" y="82.5" width="64" height="13.5" rx="2"/><rect x="1509.5" y="82.5" width="64" height="13.5" rx="2"/>
<rect x="1443" y="99" width="30" height="14" rx="2"/><rect x="1476" y="99" width="31" height="14" rx="2"/><rect x="1509.5" y="99" width="48" height="14" rx="2"/><rect x="1559" y="99" width="14.5" height="14" rx="2"/>
<rect x="1443" y="122" width="30" height="14" rx="2"/><rect x="1476" y="122" width="97.5" height="14" rx="2"/>
<rect x="1443" y="139" width="130.5" height="14" rx="2"/>
<rect x="1559" y="155.5" width="14.5" height="14" rx="2"/>
</g>
<text class="b" x="1445" y="75.5" textLength="48" lengthAdjust="spacingAndGlyphs">Load  Tool</text>
<text class="b" x="1512" y="75.5" textLength="34" lengthAdjust="spacingAndGlyphs">Save  As</text>
<text class="b" x="1445" y="92" textLength="35" lengthAdjust="spacingAndGlyphs">Import</text>
<text class="b" x="1512" y="92" textLength="32" lengthAdjust="spacingAndGlyphs">Export</text>
<text class="b" x="1445" y="109" textLength="17" lengthAdjust="spacingAndGlyphs">GoZ</text>
<text class="b" x="1478" y="109" textLength="15" lengthAdjust="spacingAndGlyphs">All</text>
<text class="b" x="1512" y="109" textLength="30" lengthAdjust="spacingAndGlyphs">Visible</text>
<text class="b" x="1562" y="109">R</text>
<text class="b" x="1445" y="132" textLength="25" lengthAdjust="spacingAndGlyphs">Clone</text>
<text class="b" x="1478" y="132" textLength="87" lengthAdjust="spacingAndGlyphs">Make  PolyMesh3D</text>
<text class="b" x="1445" y="149" textLength="88" lengthAdjust="spacingAndGlyphs">Clone  All  SubTools</text>
<text class="t" x="1445" y="163" textLength="111" lengthAdjust="spacingAndGlyphs">120912smoothRETOPO.</text>
<text class="b" x="1562" y="165.5">R</text>
<path class="line" d="M1445,167H1556"/><rect x="1530" y="165" width="12" height="4.5" rx="2" fill="#f27a00"/>
<rect x="1443" y="172.5" width="64" height="64" rx="2" fill="#353535" stroke="#1a1a1a"/>
<rect x="1444" y="225" width="62" height="11" fill="#262626"/>
<use href="#sil" fill="#b98282" transform="translate(1424.75,153.2) scale(.07,.071)"/>
<text class="d" x="1475" y="234" textLength="62" lengthAdjust="spacingAndGlyphs">1.2091 2smoothRE</text>
<rect x="1510" y="172.5" width="64" height="31" rx="2" fill="#2d2d2d"/><rect x="1510" y="206" width="64" height="31" rx="2" fill="#2d2d2d"/>
<circle cx="1537" cy="181" r="9" fill="#a83e28"/><circle cx="1544" cy="185" r="9" fill="#c05030"/>
<path d="M1541,205l3,8 8,-1-6,5 3,8-8,-5-7,5 3,-8-6,-5 8,1z" fill="#a84038"/>
<text class="s" x="1542" y="202" textLength="40" lengthAdjust="spacingAndGlyphs">Cylinder3D</text>
<text class="s" x="1541.5" y="235.5">PolyMesh3D</text>
<path d="M1480,242c-6,-3-10,2-6,5 5,3 8,5 5,10-3,4-9,3-11,-1 3,2 7,2 8,-1 0,-3-8,-4-8,-10 1,-6 9,-8 12,-3z" fill="#e89010" stroke="#a05000"/>
<text class="s" x="1475.5" y="268">SimpleBrush</text>
<rect x="1510" y="239.5" width="64" height="30" rx="2" fill="#3a3a3a"/>
<rect x="1510.5" y="262" width="63" height="7" fill="#2a2a2a"/>
<use href="#sil" fill="#b98282" transform="translate(1519.5,230.5) scale(.0306,.032)"/>
<text class="d" x="1541.5" y="268.5" textLength="62" lengthAdjust="spacingAndGlyphs">1.2091 2smoothRE</text>

<!-- tool list -->
<g>
<text class="t" x="1450" y="292.5" textLength="36" lengthAdjust="spacingAndGlyphs">SubTool</text>
<text class="t" x="1449.5" y="312.5" textLength="32" lengthAdjust="spacingAndGlyphs">Layers</text>
<text class="t" x="1449.5" y="332.5" textLength="48" lengthAdjust="spacingAndGlyphs">Geometry</text>
<text class="t" x="1449.5" y="352.5" textLength="66" lengthAdjust="spacingAndGlyphs">Geometry  HD</text>
<text class="t" x="1449.5" y="372.5" textLength="38" lengthAdjust="spacingAndGlyphs">Preview</text>
<text class="t" x="1449.5" y="392.5" textLength="37" lengthAdjust="spacingAndGlyphs">Surface</text>
<text class="t" x="1449.5" y="412.5" textLength="62" lengthAdjust="spacingAndGlyphs">Deformation</text>
<text class="t" x="1449.5" y="432.5" textLength="37" lengthAdjust="spacingAndGlyphs">Masking</text>
<text class="t" x="1449.5" y="452.5" textLength="40" lengthAdjust="spacingAndGlyphs">Visibility</text>
<text class="t" x="1449.5" y="472.5" textLength="53" lengthAdjust="spacingAndGlyphs">Polygroups</text>
<text class="t" x="1449.5" y="492.5" textLength="37" lengthAdjust="spacingAndGlyphs">Contact</text>
<text class="t" x="1449.5" y="512.5" textLength="67" lengthAdjust="spacingAndGlyphs">Morph  Target</text>
<text class="t" x="1449.5" y="532.5" textLength="45" lengthAdjust="spacingAndGlyphs">Polypaint</text>
<text class="t" x="1449.5" y="552.5" textLength="35" lengthAdjust="spacingAndGlyphs">UV  Map</text>
<text class="t" x="1449.5" y="572.5" textLength="62" lengthAdjust="spacingAndGlyphs">Texture  Map</text>
<text class="t" x="1449.5" y="592.5" textLength="88" lengthAdjust="spacingAndGlyphs">Displacement  Map</text>
<text class="t" x="1449.5" y="612.5" textLength="57" lengthAdjust="spacingAndGlyphs">Normal  Map</text>
<text class="t" x="1449.5" y="632.5" textLength="91" lengthAdjust="spacingAndGlyphs">Display  Properties</text>
<text class="t" x="1449.5" y="652.5" textLength="57" lengthAdjust="spacingAndGlyphs">Unified  Skin</text>
<text class="t" x="1449.5" y="672.5" textLength="35" lengthAdjust="spacingAndGlyphs">Import</text>
<text class="t" x="1449.5" y="692.5" textLength="32" lengthAdjust="spacingAndGlyphs">Export</text>
</g>
</svg>
<!-- colour picker -->
<div style="position:absolute;left:14px;top:443px;width:67px;height:67px;background:conic-gradient(from 315deg,#f00,#ff0 60deg,#0f0 120deg,#0ff 180deg,#00f 240deg,#f0f 300deg,#f00 360deg)"></div>
<div style="position:absolute;left:25px;top:454px;width:45px;height:45px;background:linear-gradient(to bottom,#fff,rgba(255,255,255,0) 50%,rgba(0,0,0,0) 50%,#000),linear-gradient(to right,#808080,#f00)"></div>
<div style="position:absolute;left:16px;top:445px;width:6px;height:6px;background:#e01818;border:1px solid #fff;outline:1px solid #222"></div>
<div style="position:absolute;left:26px;top:454px;width:2px;height:2px;background:#fff;border:1px solid #111"></div>
</div></body></html>
